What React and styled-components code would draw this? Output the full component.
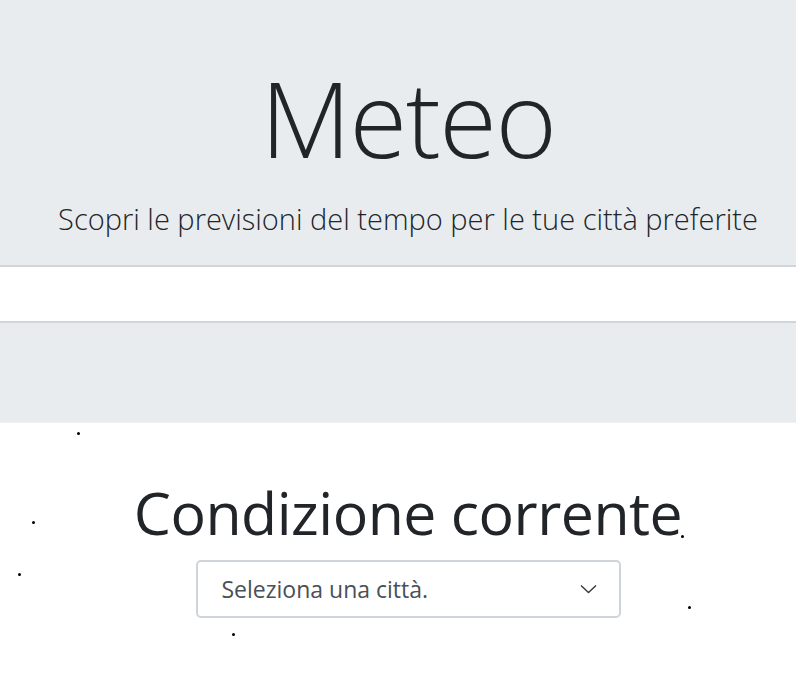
import React from 'react'
import styled, { createGlobalStyle } from 'styled-components'

const GlobalStyle = createGlobalStyle`
  * { box-sizing: border-box; }
  body {
    margin: 0;
    font-family: "Open Sans", "Noto Sans", sans-serif;
    color: #212529;
    background: #fff;
  }
`

const dots = [
  { x: 77, y: 432 },
  { x: 32, y: 521 },
  { x: 18, y: 573 },
  { x: 232, y: 633 },
  { x: 688, y: 606 },
  { x: 681, y: 535 },
]

const App = () => {
  return (
    <Page>
      <GlobalStyle />
      <Jumbo>
        <Title>Meteo</Title>
        <Lead>Scopri le previsioni del tempo per le tue città preferite</Lead>
      </Jumbo>
      <NavBand />
      <InfoBand />
      <Current>
        <SectionTitle>Condizione corrente</SectionTitle>
        <SelectBox>
          <span>Seleziona una città.</span>
          <svg width="17" height="10" viewBox="0 0 17 10" fill="none">
            <path d="M1 1.5 L8.5 8.5 L16 1.5" stroke="#343a40" strokeWidth="1.4" />
          </svg>
        </SelectBox>
      </Current>
      {dots.map((d, i) => (
        <Dot key={i} style={{ left: d.x, top: d.y }} />
      ))}
    </Page>
  )
}

const Page = styled.div`
  position: relative;
  min-height: 673px;
  overflow: hidden;
`

const Jumbo = styled.header`
  background: #e9ecef;
  height: 265px;
  display: flex;
  flex-direction: column;
  align-items: center;
  padding: 48px 0 0 20px;
`

const Title = styled.h1`
  margin: 0;
  font-size: 105px;
  font-weight: 300;
  line-height: 140px;
  letter-spacing: -1.5px;
`

const Lead = styled.p`
  margin: 13px 0 0;
  font-size: 29px;
  font-weight: 300;
  line-height: 36px;
`

const NavBand = styled.div`
  height: 58px;
  background: #fff;
  border-top: 2px solid #d1d4d9;
  border-bottom: 2px solid #d1d4d9;
`

const InfoBand = styled.div`
  height: 100px;
  background: #e9ecef;
  border-bottom: 1px solid #eef0f2;
`

const Current = styled.section`
  display: flex;
  flex-direction: column;
  align-items: center;
  padding: 44px 0 0 20px;
`

const SectionTitle = styled.h2`
  margin: 0;
  font-size: 59px;
  font-weight: 400;
  line-height: 90px;
  letter-spacing: -0.5px;
`

const SelectBox = styled.div`
  width: 425px;
  height: 58px;
  margin-top: 3px;
  border: 2px solid #ced4da;
  border-radius: 5px;
  display: flex;
  align-items: center;
  justify-content: space-between;
  padding: 0 22px 0 24px;
  font-size: 23px;
  color: #495057;
`

const Dot = styled.span`
  position: absolute;
  width: 3px;
  height: 3px;
  border-radius: 50%;
  background: #000;
`

export default App
